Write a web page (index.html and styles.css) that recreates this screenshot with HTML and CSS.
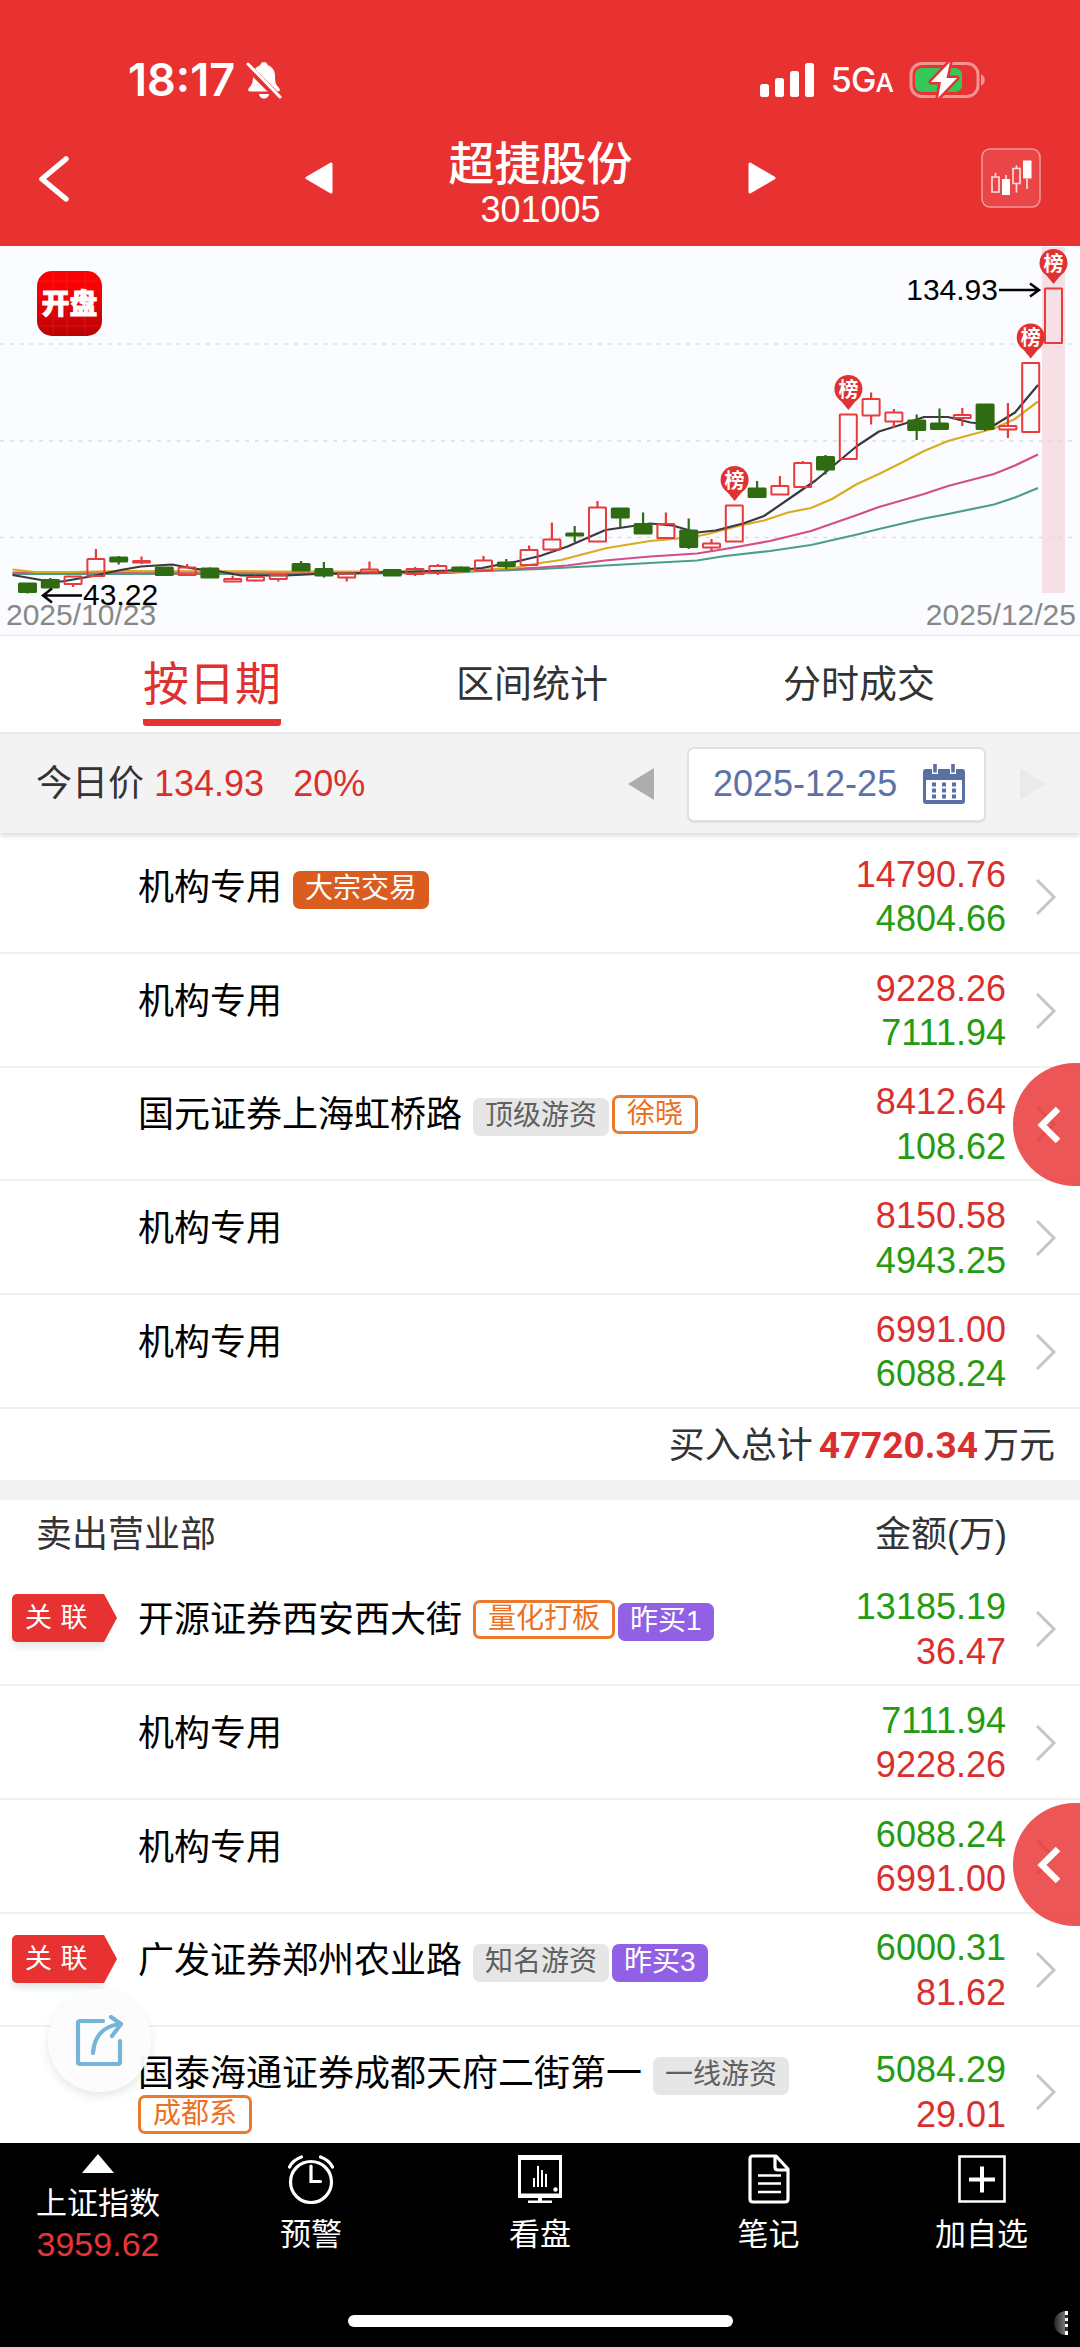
FILE: index.html
```html
<!DOCTYPE html>
<html lang="zh-CN">
<head>
  <meta charset="UTF-8">
  <title>超捷股份 301005</title>
  <link rel="stylesheet" href="styles.css">
</head>
<body>

  <header class="header">
    <div class="status-bar">
      <span class="time">18:17</span>
      <svg class="bell" width="36" height="38" viewBox="0 0 36 38">
        <path d="M18 1c-2 0-3.500 1.500-3.800 3.200C9 6 7 10 7 15c0 6-1 9-4 12-1.500 1.500-1 3.500 1 3.500h28c2 0 2.500-2 1-3.500-3-3-4-6-4-12 0-5-2-9-7.200-10.800C21.500 2.500 20 1 18 1zM13 33h10c0 2.500-2.500 4.500-5 4.500s-5-2-5-4.500z" fill="#fff"/>
        <path d="M0 4L33 37" stroke="#e83131" stroke-width="7"/>
        <path d="M2 3L34 36" stroke="#fff" stroke-width="3" stroke-linecap="round"/>
      </svg>
      <svg class="signal" width="54" height="34" viewBox="0 0 54 34" fill="#fff">
        <rect x="0" y="21" width="9" height="13" rx="2.500"/>
        <rect x="15" y="15" width="9" height="19" rx="2.500"/>
        <rect x="30" y="8" width="9" height="26" rx="2.500"/>
        <rect x="45" y="0" width="9" height="34" rx="2.500"/>
      </svg>
      <span class="network">5G<small>A</small></span>
      <svg class="battery" width="78" height="38" viewBox="0 0 78 38">
        <rect x="2" y="2.500" width="67" height="33" rx="11" fill="none" stroke="#f39595" stroke-width="3"/>
        <path d="M72 13.500c5 1 5 10 0 11z" fill="#f39595"/>
        <rect x="6" y="7" width="47" height="24" rx="6.500" fill="#34c759"/>
        <path d="M41 1L22 21h10l-3 16 19-20H37.500z" fill="#fff" stroke="#e83131" stroke-width="5" stroke-linejoin="round" paint-order="stroke"/>
      </svg>
    </div>
    <div class="title-bar">
      <svg class="back" width="32" height="46" viewBox="0 0 32 46"><path d="M28 3L4 23l24 20" fill="none" stroke="#fff" stroke-width="5.500" stroke-linecap="round" stroke-linejoin="round"/></svg>
      <svg width="28" height="32" viewBox="0 0 28 32"><path d="M26 2v28L2 16z" fill="#fff" stroke="#fff" stroke-width="3" stroke-linejoin="round"/></svg>
      <div class="stock">
        <h1>超捷股份</h1>
        <p>301005</p>
      </div>
      <svg width="28" height="32" viewBox="0 0 28 32"><path d="M2 2v28l24-14z" fill="#fff" stroke="#fff" stroke-width="3" stroke-linejoin="round"/></svg>
      <svg class="kline-btn" width="60" height="60" viewBox="0 0 60 60">
        <rect x="1" y="1" width="58" height="58" rx="8" fill="#eb4647" stroke="#f49a9a" stroke-width="1.500"/>
        <g fill="none" stroke="#fbdcdc" stroke-width="1.700">
          <path d="M11 29h7v15h-7zM14.500 25v4M14.500 44v1M32 20.500h7v15h-7zM35.500 17.500v3M35.500 35.500v9M25 27v4M46 31v10"/>
        </g>
        <path d="M21 31h8v16h-8zM42 12.500h8.500v18H42z" fill="#fff"/>
      </svg>
    </div>
  </header>

  <section class="chart">
    <svg id="kline" width="1080" height="389" viewBox="0 246 1080 389">
      <defs>
        <linearGradient id="logoBg" x1="0" y1="0" x2="0" y2="1">
          <stop offset="0.250" stop-color="#fa0205"/>
          <stop offset="1" stop-color="#b80305"/>
        </linearGradient>
      </defs>
      <rect x="1042" y="247" width="23" height="346" fill="#f7dfe6"/>
      <g stroke="#dcdde4" stroke-width="1.300" stroke-dasharray="4 5.800">
        <path d="M0 344H1076M0 441H1076M0 537.500H1076"/>
      </g>
      <rect x="37" y="271" width="65" height="65" rx="15" fill="url(#logoBg)"/>
      <path d="M53 272v63M67 272v63M85 272v63M38 281h63M38 326h63" stroke="#e63a32" stroke-width="0.700" opacity="0.600"/>
      <text class="logo-text" x="69.500" y="314">开盘</text>
      <g id="lines" fill="none" stroke-width="2.200" stroke-linejoin="round">
        <path stroke="#4a9f85" d="M12.500 574L140 574 300 574 450 573 482 571 540 569 605 565.500 650 563 697 560.500 725 556 770 551 811 545 857 534.500 879 529 924 518.500 948 514 994 504.500 1015 497.500 1038 488"/>
        <path stroke="#d04f86" d="M12.500 572.500L140 572 260 572 450 572 510 569 540 567.500 567 565.500 605 560.500 650 556.500 697 553.500 725 549 770 541 811 531 857 515 879 507 924 494 948 486 994 474 1015 465.500 1038 454.500"/>
        <path stroke="#d9ac20" d="M12.500 569.500L35 572 70 572 120 571 280 571.500 460 571.500 516 567.500 540 563 561 560 607 548 650 541 690 537.500 708 534 740 525.500 764 520.500 788 512.500 811 508 832 499 857 484 879 474 902 462.500 924 451 948 441 970 435 994 428.500 1015 419 1038 401.500"/>
        <path stroke="#39393f" d="M12.500 575L41 580 62 581.500 93 576 120.500 570 141 566.500 172 564.500 193 568.500 220 571.500 241 575.500 286 575.500 317 574 344 573.500 448 570.500 482 568 516.500 561.500 540 556 567.500 546.500 605.500 530 650 523.500 672.500 525.500 697 532.500 715.500 530.500 743 523.500 764 516 788 499.500 815.500 480.500 836 463.500 857 446 879 431.500 905 423.500 924 417 948 417 970.500 422.500 994.500 425 1015 412.500 1038 385"/>
      </g>
      <g id="candles"></g>
      <g id="pins"></g>
      <text class="date-label" x="6" y="624.500">2025/10/23</text>
      <text class="date-label" x="1076" y="624.500" text-anchor="end">2025/12/25</text>
      <g fill="none" stroke="#000" stroke-width="2.500">
        <path d="M43 595.500H82M52 588.500L43 595.500 52 602.500M999 290H1039M1030 283.500L1039 290 1030 296.500"/>
      </g>
      <text class="price-label" x="83" y="604.500">43.22</text>
      <text class="price-label" x="998" y="300" text-anchor="end">134.93</text>
    </svg>
  </section>

  <nav class="tabs">
    <a class="tab active">按日期</a>
    <a class="tab">区间统计</a>
    <a class="tab">分时成交</a>
  </nav>

  <section class="filter">
    <p class="today">今日价 <span class="red">134.93</span> <span class="red pct">20%</span></p>
    <svg width="28" height="34" viewBox="0 0 28 34"><path d="M27 1v32L1 17z" fill="#adadad"/></svg>
    <div class="date-box">
      <span>2025-12-25</span>
      <svg width="42" height="40" viewBox="0 0 42 40">
        <path d="M3 5h36q3 0 3 3v29q0 3-3 3H3q-3 0-3-3V8q0-3 3-3z" fill="#5a6fa3"/>
        <path d="M3 16h36v20H3z" fill="#fff"/>
        <path d="M9 0h6v10H9zM27 0h6v10h-6z" fill="#fff"/>
        <path d="M12 0v8.500M30 0v8.500" stroke="#5a6fa3" stroke-width="3.600"/>
        <path d="M9 20.500h24M9 26.500h24M9 32.500h24" stroke="#5a6fa3" stroke-width="4" stroke-dasharray="4 6"/>
      </svg>
    </div>
    <svg width="28" height="34" viewBox="0 0 28 34"><path d="M1 1v32l26-16z" fill="#eaeaea"/></svg>
  </section>

  <main>
    <section class="list" id="buyList"></section>
    <p class="total">买入总计<b>47720.34</b>万元</p>
    <div class="list-head"><span>卖出营业部</span><span>金额(万)</span></div>
    <section class="list" id="sellList"></section>
  </main>

  <div class="side-btn side-top"><svg width="24" height="38" viewBox="0 0 24 38"><path d="M21 3L5 19l16 16" fill="none" stroke="#fff" stroke-width="6.500"/></svg></div>
  <div class="side-btn side-bottom"><svg width="24" height="38" viewBox="0 0 24 38"><path d="M21 3L5 19l16 16" fill="none" stroke="#fff" stroke-width="6.500"/></svg></div>

  <div class="share-btn">
    <svg width="50" height="52" viewBox="0 0 50 52" fill="none" stroke="#74b4d8" stroke-width="4.200" stroke-linecap="round" stroke-linejoin="round">
      <path d="M28 6H5q-2 0-2 2v39q0 2 2 2h38q2 0 2-2V26"/>
      <path d="M18 38C19 22 28 11 45 9M36 2l10 7-9 12"/>
    </svg>
  </div>

  <footer class="bottom-nav">
    <a class="nav-item index">
      <svg width="32" height="19" viewBox="0 0 32 19"><path d="M16 0l16 19H0z" fill="#fff"/></svg>
      <span>上证指数</span>
      <span class="index-value">3959.62</span>
    </a>
    <a class="nav-item">
      <svg width="48" height="50" viewBox="0 0 48 50" fill="none" stroke="#fff" stroke-width="3.200" stroke-linecap="round">
        <ellipse cx="24" cy="28" rx="20.500" ry="20.500"/>
        <path d="M24 12v15.500h9.500" stroke-linejoin="miter"/>
        <path d="M2.500 13Q6 6 14.500 3M45.500 13Q42 6 33.500 3"/>
      </svg>
      <span>预警</span>
    </a>
    <a class="nav-item">
      <svg width="46" height="50" viewBox="0 0 46 50">
        <path d="M1 1h44v43H1z" fill="#fff"/>
        <path d="M4 6h38v33.500H4z" fill="#000"/>
        <path d="M21 44h4v3h-4zM11 46.500h24V49H11z" fill="#fff"/>
        <path d="M17 33v-9M21 33v-21M25 33v-17M29 33v-13" stroke="#fff" stroke-width="2"/>
        <circle cx="38.500" cy="35.500" r="2.200" fill="#fff"/>
      </svg>
      <span>看盘</span>
    </a>
    <a class="nav-item">
      <svg width="42" height="50" viewBox="0 0 42 50" fill="none" stroke="#fff" stroke-width="3.200" stroke-linejoin="round">
        <path d="M28 2H5Q2 2 2 5v40q0 3 3 3h32q3 0 3-3V15zM27 2v11q0 3 3 3h10"/>
        <path d="M10 21.500h23M10 29.500h23M10 38h23" stroke-width="2.400"/>
      </svg>
      <span>笔记</span>
    </a>
    <a class="nav-item">
      <svg width="48" height="50" viewBox="0 0 48 50" fill="none" stroke="#fff">
        <path d="M1.500 2.500h45v45h-45z" stroke-width="2.600"/>
        <path d="M24 12.500v26M11 25.500h26" stroke-width="4"/>
      </svg>
      <span>加自选</span>
    </a>
    <div class="home-bar"></div>
    <div class="edge-mark"></div>
  </footer>

  <script src="script.js"></script>
</body>
</html>
```

FILE: styles.css
```css
* {
  box-sizing: border-box;
  margin: 0;
  padding: 0;
}
body {
  width: 1080px;
  height: 2347px;
  position: relative;
  overflow: hidden;
  background: #fff;
  color: #333;
  font-family: "Liberation Sans", "Noto Sans CJK SC", sans-serif;
  font-size: 36px;
  line-height: 44px;
}
svg {
  display: block;
  flex: none;
}
.red { color: #d9302f; }
.green { color: #259b13; }

/* header */
.header {
  height: 246px;
  background: #e83131;
  color: #fff;
}
.status-bar {
  display: flex;
  align-items: center;
  height: 132px;
  padding: 28px 93px 0 128px;
}
.time {
  font-family: Inter, sans-serif;
  font-weight: 600;
  font-size: 45px;
  width: 118px;
}
.signal { margin-left: auto; }
.network {
  font-family: Inter, sans-serif;
  font-weight: 500;
  font-size: 34px;
  letter-spacing: -0.9px;
  margin: 2px 16px 0 17px;
}
.network small { font-size: 26px; }
.title-bar {
  display: flex;
  align-items: center;
  height: 114px;
  padding: 0 39px 22px 38px;
}
.stock {
  width: 415px;
  text-align: center;
  padding-top: 8px;
}
.stock h1 {
  font-size: 46px;
  font-weight: 500;
  line-height: 54px;
}
.stock p { line-height: 37px; }
.back {
  margin-right: 235px;
  margin-top: 2px;
}
.kline-btn { margin-left: auto; }

/* k-line chart */
.chart {
  height: 390px;
  background: #fbfcff;
  border-bottom: 1px solid #e3e6ea;
}
.logo-text {
  font: 900 28px "Noto Sans CJK SC", sans-serif;
  fill: #fff;
  stroke: #fff;
  stroke-width: 0.8;
  text-anchor: middle;
}
.date-label {
  font-size: 30px;
  fill: #888;
}
.price-label {
  font-size: 30px;
  fill: #000;
}
.pin-text {
  font: 700 20px "Noto Sans CJK SC", sans-serif;
  fill: #fff;
  text-anchor: middle;
}

/* tabs */
.tabs {
  display: flex;
  gap: 175px;
  height: 98px;
  padding-left: 143px;
  border-bottom: 2px solid #e9ecec;
}
.tab {
  font-size: 38px;
  line-height: 96px;
}
.tab.active {
  font-size: 46px;
  color: #e03030;
  height: 90px;
  border-bottom: 7px solid #e83131;
  border-radius: 3px;
}

/* price and date */
.filter {
  display: flex;
  align-items: center;
  height: 99px;
  padding: 0 33px 0 36px;
  background: #f3f3f3;
  box-shadow: 0 3px 5px #dcdcdc;
  position: relative;
}
.today { margin-right: auto; }
.pct { margin-left: 19px; }
.date-box {
  display: flex;
  align-items: center;
  justify-content: space-between;
  width: 299px;
  height: 76px;
  margin: 2px 33px 0 32px;
  padding: 0 19px 0 24px;
  background: #fff;
  border: 2px solid #e0e0e0;
  border-bottom-width: 3px;
  border-radius: 7px;
  color: #5c71a6;
}

/* broker rows */
#buyList { padding-top: 7px; }
.row {
  display: flex;
  align-items: center;
  height: 113.75px;
  padding: 2px 23px 0 0;
  border-bottom: 2px solid #f0f0f0;
}
#sellList .row:last-child { height: 130px; }
.related {
  width: 138px;
  padding-left: 12px;
  height: 70px;
  flex: none;
}
.related span {
  display: block;
  width: 92px;
  height: 48px;
  background: #e83131;
  border-radius: 5px 0 0 5px;
  color: #fff;
  font-size: 27px;
  line-height: 48px;
  padding-left: 13px;
  word-spacing: 1px;
  position: relative;
  box-shadow: 0 5px 7px #e3e8e8;
  white-space: nowrap;
}
.related span::after {
  content: "";
  position: absolute;
  left: 92px;
  top: 0;
  border-left: 13px solid #e83131;
  border-top: 24px solid transparent;
  border-bottom: 24px solid transparent;
}
.name {
  display: flex;
  flex-wrap: wrap;
  align-items: center;
  gap: 0 3px;
  width: 700px;
  height: 62px;
  align-content: flex-start;
  color: #000;
}
.name > span:first-child { margin-right: 8px; }
#sellList .row:last-child .name { height: 80px; }
.tag {
  height: 38px;
  line-height: 36px;
  padding: 0 12px;
  border-radius: 7px;
  font-size: 28px;
  margin-top: 4px;
}
.tag.block { background: #da5d1f; color: #fff; }
.tag.gray { background: #e6e6e6; color: #606060; }
.tag.purple { background: #9160e4; color: #fff; }
.tag.line {
  border: 3px solid #ec7a2d;
  color: #ec701d;
  height: 39px;
  line-height: 32px;
  margin-top: -1px;
}
.amount {
  margin-left: auto;
  text-align: right;
  line-height: 44.5px;
  margin-right: 29px;
  padding-top: 1px;
}

.total {
  height: 71.5px;
  line-height: 74px;
  padding-right: 25px;
  text-align: right;
}
.total b {
  font-family: Roboto, sans-serif;
  font-size: 37px;
  color: #d9302f;
  margin: 0 5px 0 6px;
}
.list-head {
  display: flex;
  justify-content: space-between;
  height: 92px;
  border-top: 20px solid #f2f2f2;
  padding: 13px 73px 0 36px;
}

/* floating buttons */
.side-btn {
  position: absolute;
  right: 0;
  width: 67px;
  height: 123px;
  display: flex;
  align-items: center;
  padding-left: 24px;
  background: rgba(232, 49, 49, 0.82);
  border-radius: 62px 0 0 62px;
}
.side-top { top: 1063px; }
.side-bottom { top: 1803px; }
.share-btn {
  position: absolute;
  left: 48px;
  top: 1989px;
  width: 103px;
  height: 103px;
  border-radius: 50%;
  background: rgba(252, 252, 252, 0.96);
  box-shadow: 0 4px 10px rgba(0, 0, 0, 0.1);
  display: flex;
  align-items: center;
  justify-content: center;
}

/* bottom nav */
.bottom-nav {
  position: absolute;
  left: 0;
  top: 2143px;
  width: 1080px;
  height: 204px;
  background: #000;
  color: #fff;
  display: grid;
  grid-template-columns: 196px 230px 228px 229px 197px;
}
.nav-item {
  display: flex;
  flex-direction: column;
  align-items: center;
  padding-top: 11px;
  font-size: 31px;
  line-height: 40px;
}
.nav-item span { margin-top: 11px; }
.nav-item .index-value {
  margin-top: 0;
  font-size: 34px;
  color: #e63438;
}
.home-bar {
  position: absolute;
  left: 348px;
  bottom: 20px;
  width: 385px;
  height: 12px;
  border-radius: 6px;
  background: #fff;
}
.edge-mark {
  position: absolute;
  right: 12px;
  bottom: 12px;
  width: 14px;
  height: 24px;
  border-radius: 14px 0 0 14px;
  border-right: 3px dotted #fff;
  background: linear-gradient(90deg, #222, #777);
}
```

FILE: script.js
```js
// [color, body top, body bottom, high, low]
const candles = [
  ['g', 583.5, 592, 583.5, 593.5], ['g', 580, 587.5, 578, 588], ['r', 576.5, 584, 576, 587],
  ['r', 559, 576, 549, 577], ['g', 557.5, 561.5, 556, 564.5], ['r', 561, 562.5, 556.5, 564],
  ['g', 567.5, 575, 567, 575.5], ['r', 567.5, 575, 564, 575], ['g', 568.5, 577.5, 567.5, 578],
  ['r', 579, 581.5, 575.5, 581.5], ['r', 577, 580.5, 575.5, 581.5], ['r', 575, 579, 574.5, 581.5],
  ['g', 564, 570.5, 561, 570.5], ['g', 569, 575.5, 562, 577.5], ['r', 573.5, 577.5, 573, 581.5],
  ['r', 569.5, 572.5, 561.5, 573], ['g', 570, 575.5, 570, 576], ['r', 569, 574, 567, 576],
  ['r', 566, 572.5, 564, 575], ['g', 567.5, 571, 566.5, 572], ['r', 560.5, 570.5, 556, 571],
  ['g', 562.5, 566, 559, 569], ['r', 550, 565, 545.5, 565], ['r', 539.5, 549.5, 522.5, 552],
  ['g', 533.5, 535.5, 526, 542], ['r', 507.5, 541.5, 501, 542], ['g', 508.5, 517.5, 508, 527],
  ['g', 524, 533.5, 512.5, 533.5], ['r', 524, 538, 512.5, 538], ['g', 530.5, 547, 518.5, 549],
  ['r', 543.5, 547.5, 539, 550.5], ['r', 505.5, 541.5, 505.5, 541.5], ['g', 488.5, 497, 481, 497],
  ['r', 486, 494.5, 476, 494.5], ['r', 463, 487, 461, 488], ['g', 457, 469.5, 455, 474.5],
  ['r', 414.5, 459, 414.5, 459], ['r', 399, 415.5, 392.5, 424.5], ['r', 412.5, 421.5, 409, 428],
  ['g', 420.5, 430, 414.5, 440], ['g', 423.5, 429, 408.5, 429], ['r', 415, 418, 408, 426],
  ['g', 404.5, 429, 404.5, 431], ['r', 426, 429.5, 403, 438], ['r', 363, 432, 363, 432],
  ['r', 288.5, 343, 288.5, 343]
];

let svg = '';
candles.forEach(([c, top, bottom, high, low], i) => {
  const x = 27.5 + i * 22.8;
  const color = c === 'g' ? '#2f6b12' : '#e83b3b';
  const fill = c === 'g' ? color : 'none';
  svg += `<path d="M${x} ${high}V${top}M${x} ${bottom}V${low}" stroke="${color}" stroke-width="2.2"/>`;
  svg += `<rect x="${x - 8.5}" y="${top}" width="17" height="${bottom - top}" rx="0.5" fill="${fill}" stroke="${color}" stroke-width="2"/>`;
});
document.getElementById('candles').innerHTML = svg;

const pins = [[734.6, 480], [848.4, 389], [1030.7, 337.5], [1053.5, 263]];
document.getElementById('pins').innerHTML = pins.map(([x, y]) =>
  `<circle cx="${x}" cy="${y}" r="14" fill="#e03232"/>
   <path d="M${x - 9} ${y + 10}L${x} ${y + 21}L${x + 9} ${y + 10}z" fill="#e03232"/>
   <text class="pin-text" x="${x}" y="${y + 7.5}">榜</text>`).join('');

const buys = [
  { name: '机构专用', tags: [['block', '大宗交易']], a: '14790.76', b: '4804.66' },
  { name: '机构专用', a: '9228.26', b: '7111.94' },
  { name: '国元证券上海虹桥路', tags: [['gray', '顶级游资'], ['line', '徐晓']], a: '8412.64', b: '108.62' },
  { name: '机构专用', a: '8150.58', b: '4943.25' },
  { name: '机构专用', a: '6991.00', b: '6088.24' }
];
const sells = [
  { name: '开源证券西安西大街', related: true, tags: [['line', '量化打板'], ['purple', '昨买1']], a: '13185.19', b: '36.47' },
  { name: '机构专用', a: '7111.94', b: '9228.26' },
  { name: '机构专用', a: '6088.24', b: '6991.00' },
  { name: '广发证券郑州农业路', related: true, tags: [['gray', '知名游资'], ['purple', '昨买3']], a: '6000.31', b: '81.62' },
  { name: '国泰海通证券成都天府二街第一', tags: [['gray', '一线游资'], ['line', '成都系']], a: '5084.29', b: '29.01' }
];

function renderRows(id, rows, first, second) {
  document.getElementById(id).innerHTML = rows.map(r => `
    <div class="row">
      <div class="related">${r.related ? '<span>关 联</span>' : ''}</div>
      <div class="name"><span>${r.name}</span>${(r.tags || []).map(t => `<span class="tag ${t[0]}">${t[1]}</span>`).join('')}</div>
      <div class="amount"><div class="${first}">${r.a}</div><div class="${second}">${r.b}</div></div>
      <svg width="22" height="38" viewBox="0 0 22 38"><path d="M2 2l17 17L2 36" fill="none" stroke="#c6c6c6" stroke-width="3"/></svg>
    </div>`).join('');
}
renderRows('buyList', buys, 'red', 'green');
renderRows('sellList', sells, 'green', 'red');
```
